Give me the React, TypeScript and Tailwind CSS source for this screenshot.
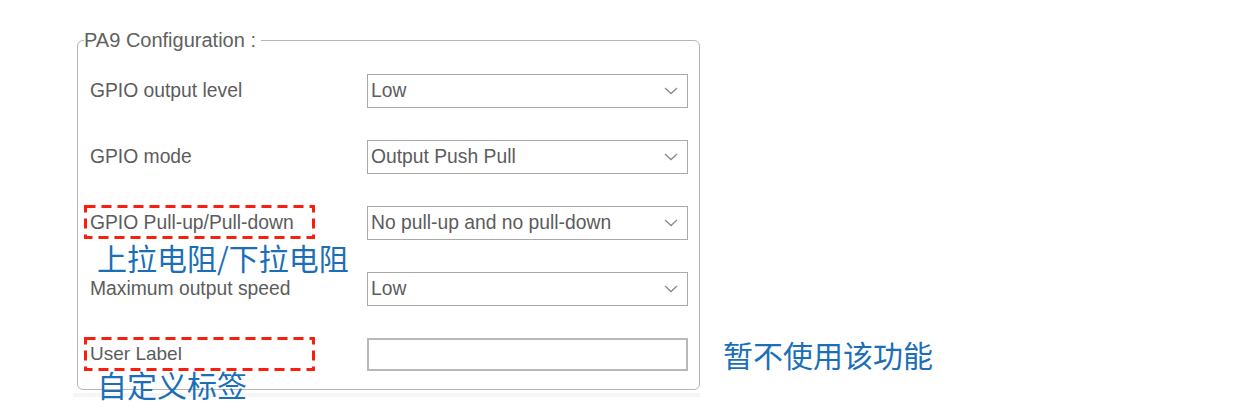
import React from "react";

const rows = [
  { label: "GPIO output level", value: "Low" },
  { label: "GPIO mode", value: "Output Push Pull" },
  { label: "GPIO Pull-up/Pull-down", value: "No pull-up and no pull-down", note: "上拉电阻/下拉电阻" },
  { label: "Maximum output speed", value: "Low" },
];

const Chevron = () => (
  <svg width="14" height="8" viewBox="0 0 14 8" className="absolute right-[9px] top-1/2 -translate-y-1/2">
    <path d="M1 1 L7 6.5 L13 1" fill="none" stroke="#8a8a8a" strokeWidth="1.3" />
  </svg>
);

const DashBox = () => (
  <svg width="232" height="34" className="absolute left-[-6px] top-[-1px] pointer-events-none">
    <rect x="1.5" y="1.5" width="228" height="31" fill="none" stroke="#f5200e" strokeWidth="3" strokeDasharray="10 6" />
  </svg>
);

const noteText = "absolute leading-none text-[30px] text-[#1b6fb8] whitespace-nowrap [font-family:'Noto_Sans_CJK_SC',sans-serif]";

export default function App() {
  return (
    <div className="min-h-[414px] w-[1236px] bg-white pl-[77px] pt-[29px] [font-family:'Liberation_Sans',Arial,sans-serif] text-[#5c5c5c]">
      <fieldset className="w-[623px] rounded-[6px] border border-[#b5b5b5] p-0 m-0">
        <legend className="ml-[6px] pr-[5px] text-[20px] leading-[22px] text-[#606060]">PA9 Configuration :</legend>
        <div className="flex flex-col gap-[32px] pl-[12px] pr-[10px] pt-[23px] pb-[18px]">
          {rows.map((r) => (
            <div key={r.label} className="flex h-[34px] items-center">
              <div className="relative flex h-full w-[277px] items-center pt-[1px] text-[19.3px]">
                {r.note && <DashBox />}
                <span>{r.label}</span>
                {r.note && <span className={`${noteText} left-[7px] top-[36px]`}>{r.note}</span>}
              </div>
              <div className="relative flex h-full w-[321px] items-center border border-[#a9a9a9] bg-white pl-[3px] text-[19.3px]">
                <span>{r.value}</span>
                <Chevron />
              </div>
            </div>
          ))}
          <div className="flex h-[33px] items-center">
            <div className="relative flex h-full w-[277px] items-center text-[19px]">
              <DashBox />
              <span>User Label</span>
              <span className={`${noteText} left-[7px] top-[31px]`}>自定义标签</span>
            </div>
            <div className="relative h-full w-[321px] border-2 border-[#b8b8b8] bg-white">
              <span className={`${noteText} left-[354px] top-[-1px]`}>暂不使用该功能</span>
            </div>
          </div>
        </div>
      </fieldset>
      <div className="mt-[3px] ml-[-4px] h-[4px] w-[627px] bg-[#f5f5f5]" />
    </div>
  );
}
